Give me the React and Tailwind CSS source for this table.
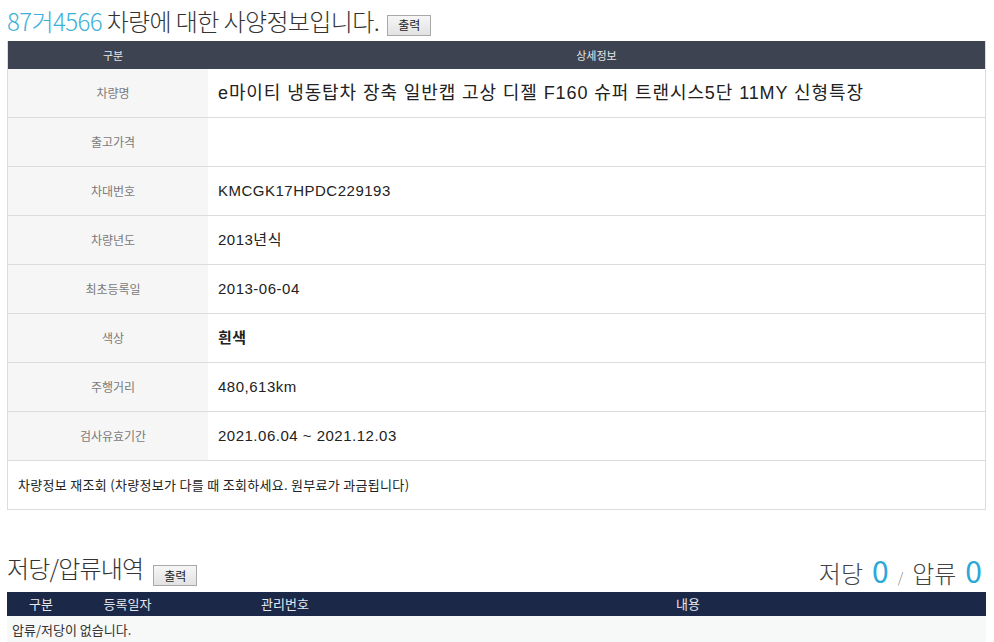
const font = "font-['Malgun_Gothic','Noto_Sans_CJK_KR',sans-serif]";
const valueFont = "font-['Liberation_Sans','Noto_Sans_CJK_KR',sans-serif]";

const rows = [
  { label: "차량명", value: "e마이티 냉동탑차 장축 일반캡 고상 디젤 F160 슈퍼 트랜시스5단 11MY 신형특장", big: true },
  { label: "출고가격", value: "" },
  { label: "차대번호", value: "KMCGK17HPDC229193" },
  { label: "차량년도", value: "2013년식" },
  { label: "최초등록일", value: "2013-06-04" },
  { label: "색상", value: "흰색", bold: true },
  { label: "주행거리", value: "480,613km" },
  { label: "검사유효기간", value: "2021.06.04 ~ 2021.12.03" },
];

const PrintButton = () => (
  <button className="h-[21px] w-[44px] border border-[#a9a9a9] bg-gradient-to-b from-[#f6f6f6] to-[#e2e2e2] text-[12px] leading-none text-[#222]">
    출력
  </button>
);

export default function App() {
  return (
    <div className={`w-[994px] h-[642px] overflow-hidden bg-white pl-[7px] pr-[8px] ${font}`}>
      {/* 사양정보 */}
      <div className="flex h-[41px] items-center gap-[8px]">
        <h1 className="text-[24px] font-light tracking-[-0.6px] leading-none text-[#333]">
          <span className="text-[#3bb0d9]">87거4566</span> 차량에 대한 사양정보입니다.
        </h1>
        <div className="mt-[6px]">
          <PrintButton />
        </div>
      </div>

      <div className="border-l border-r border-[#dcdcdc]">
        <div className="flex h-[28px] items-center bg-[#3d4350] text-[11px] text-[#e6e8ec]">
          <div className="w-[200px] pl-[10px] text-center">구분</div>
          <div className="flex-1 text-center">상세정보</div>
        </div>
        {rows.map((r) => (
          <div key={r.label} className="flex h-[49px] border-b border-[#dcdcdc]">
            <div className="flex w-[200px] items-center justify-center bg-[#f6f6f6] pl-[10px] text-[12px] text-[#7a7a7a]">
              {r.label}
            </div>
            <div
              className={`flex flex-1 items-center pl-[10px] text-[#222] ${valueFont} ${
                r.big ? "text-[18px] tracking-[0.9px]" : "text-[15px] tracking-[0.5px]"
              } ${r.bold ? "font-bold" : ""}`}
            >
              {r.value}
            </div>
          </div>
        ))}
        <div className="flex h-[49px] items-center border-b border-[#dcdcdc] pl-[10px] text-[13px] tracking-[0.3px] text-[#222]">
          차량정보 재조회 (차량정보가 다를 때 조회하세요. 원부료가 과금됩니다)
        </div>
      </div>

      {/* 저당/압류내역 */}
      <div className="mt-[38px] flex h-[44px] items-center justify-between">
        <div className="flex items-center gap-[10px]">
          <h2 className="mb-[4px] text-[24px] font-light tracking-[-0.8px] leading-none text-[#333]">저당/압류내역</h2>
          <div className="mt-[8px]">
            <PrintButton />
          </div>
        </div>
        <div className="flex items-baseline gap-[9px] pr-[4px] text-[24px] font-light leading-none text-[#444]">
          <span>저당</span>
          <span className="text-[30px] font-normal text-[#2aa8d8]">0</span>
          <span className="text-[14px] text-[#888]">/</span>
          <span>압류</span>
          <span className="text-[30px] font-normal text-[#2aa8d8]">0</span>
        </div>
      </div>

      <div className="flex h-[24px] items-center bg-[#1b2847] text-[13px] text-[#e6e9f0]">
        <div className="w-[68px] text-center">구분</div>
        <div className="w-[105px] text-center">등록일자</div>
        <div className="w-[210px] text-center">관리번호</div>
        <div className="flex-1 text-center">내용</div>
      </div>
      <div className="flex h-[28px] items-center bg-[#f7f8f8] pl-[5px] text-[13px] text-[#333]">
        압류/저당이 없습니다.
      </div>
    </div>
  );
}
